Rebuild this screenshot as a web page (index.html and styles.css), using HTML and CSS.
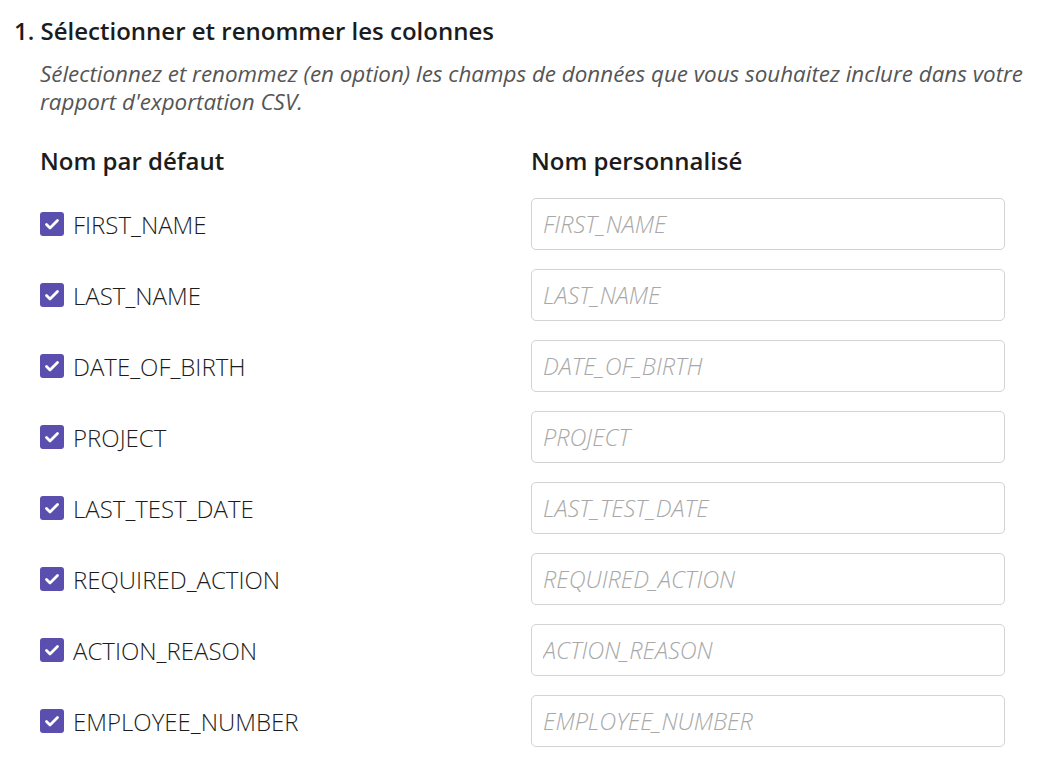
FILE: index.html
```html
<!DOCTYPE html>
<html lang="fr">
<head>
<meta charset="utf-8">
<link rel="stylesheet" href="styles.css">
</head>
<body>
<div class="page">
  <h1 class="title">1. Sélectionner et renommer les colonnes</h1>
  <div class="content">
    <p class="desc">Sélectionnez et renommez (en option) les champs de données que vous souhaitez inclure dans votre rapport d'exportation CSV.</p>
    <div class="heads">
      <div class="head col-a">Nom par défaut</div>
      <div class="head">Nom personnalisé</div>
    </div>
    <div class="rows">
      <div class="row">
        <label class="check"><span class="box"><svg viewBox="0 0 24 24"><path d="M6.5 12.5l3.5 3.5 7.5-7.5"/></svg></span>FIRST_NAME</label>
        <input class="field" type="text" placeholder="FIRST_NAME">
      </div>
      <div class="row">
        <label class="check"><span class="box"><svg viewBox="0 0 24 24"><path d="M6.5 12.5l3.5 3.5 7.5-7.5"/></svg></span>LAST_NAME</label>
        <input class="field" type="text" placeholder="LAST_NAME">
      </div>
      <div class="row">
        <label class="check"><span class="box"><svg viewBox="0 0 24 24"><path d="M6.5 12.5l3.5 3.5 7.5-7.5"/></svg></span>DATE_OF_BIRTH</label>
        <input class="field" type="text" placeholder="DATE_OF_BIRTH">
      </div>
      <div class="row">
        <label class="check"><span class="box"><svg viewBox="0 0 24 24"><path d="M6.5 12.5l3.5 3.5 7.5-7.5"/></svg></span>PROJECT</label>
        <input class="field" type="text" placeholder="PROJECT">
      </div>
      <div class="row">
        <label class="check"><span class="box"><svg viewBox="0 0 24 24"><path d="M6.5 12.5l3.5 3.5 7.5-7.5"/></svg></span>LAST_TEST_DATE</label>
        <input class="field" type="text" placeholder="LAST_TEST_DATE">
      </div>
      <div class="row">
        <label class="check"><span class="box"><svg viewBox="0 0 24 24"><path d="M6.5 12.5l3.5 3.5 7.5-7.5"/></svg></span>REQUIRED_ACTION</label>
        <input class="field" type="text" placeholder="REQUIRED_ACTION">
      </div>
      <div class="row">
        <label class="check"><span class="box"><svg viewBox="0 0 24 24"><path d="M6.5 12.5l3.5 3.5 7.5-7.5"/></svg></span>ACTION_REASON</label>
        <input class="field" type="text" placeholder="ACTION_REASON">
      </div>
      <div class="row">
        <label class="check"><span class="box"><svg viewBox="0 0 24 24"><path d="M6.5 12.5l3.5 3.5 7.5-7.5"/></svg></span>EMPLOYEE_NUMBER</label>
        <input class="field" type="text" placeholder="EMPLOYEE_NUMBER">
      </div>
    </div>
  </div>
</div>
</body>
</html>
```
FILE: styles.css
```css
html, body {
  margin: 0;
  padding: 0;
  background: #ffffff;
}
body {
  font-family: "Open Sans", "Liberation Sans", sans-serif;
  color: #1f1f1f;
}
.page {
  padding: 15px 14px 0 14px;
}
.title {
  margin: 0;
  font-size: 24px;
  font-weight: 600;
  line-height: 32px;
  color: #1c1c1c;
}
.content {
  padding-left: 26px;
}
.desc {
  margin: 13px 0 0 0;
  font-size: 22.4px;
  font-style: italic;
  font-weight: 400;
  line-height: 28px;
  color: #555555;
  max-width: 1000px;
}
.heads {
  display: flex;
  margin-top: 29px;
}
.head {
  font-size: 24px;
  font-weight: 600;
  line-height: 32px;
  color: #1c1c1c;
}
.col-a {
  width: 491px;
}
.rows {
  display: flex;
  flex-direction: column;
  gap: 19px;
  margin-top: 21px;
}
.row {
  display: flex;
  align-items: center;
  height: 52px;
}
.check {
  width: 491px;
  display: flex;
  align-items: center;
  gap: 9px;
  font-size: 24px;
  font-weight: 300;
  color: #1c1c1c;
}
.box {
  width: 24px;
  height: 24px;
  border-radius: 3px;
  background: #5a4fae;
  display: flex;
  align-items: center;
  justify-content: center;
}
.box svg {
  width: 24px;
  height: 24px;
  fill: none;
  stroke: #ffffff;
  stroke-width: 2.8;
  stroke-linecap: round;
  stroke-linejoin: round;
}
.field {
  box-sizing: border-box;
  width: 474px;
  height: 52px;
  margin: 0;
  border: 1px solid #d3d3d3;
  border-radius: 5px;
  padding: 0 11px;
  font-family: "Open Sans", "Liberation Sans", sans-serif;
  font-size: 23.5px;
  font-style: italic;
  font-weight: 300;
  color: #333;
  outline: none;
}
.field::placeholder {
  color: #a8a8a8;
  opacity: 1;
}
```
